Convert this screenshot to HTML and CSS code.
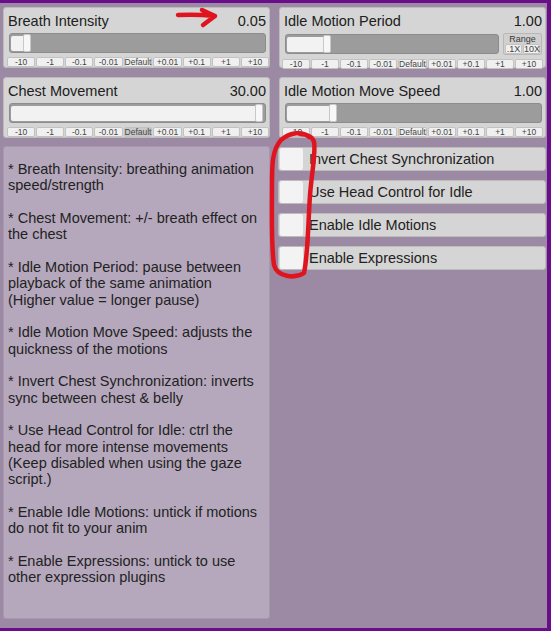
FILE: index.html
```html
<!DOCTYPE html>
<html>
<head>
	<title>Breath settings</title>
	<link rel="stylesheet" href="styles.css">
</head>
<body>
	<div class="window">
		<div class="col">
			<div class="panel">
				<div class="head"><span>Breath Intensity</span><span>0.05</span></div>
				<div class="row">
					<div class="track"><div class="fill" style="width:5%"></div><div class="knob"></div></div>
				</div>
				<div class="steps">
					<button>-10</button><button>-1</button><button>-0.1</button><button>-0.01</button><button>Default</button><button>+0.01</button><button>+0.1</button><button>+1</button><button>+10</button>
				</div>
			</div>
			<div class="panel">
				<div class="head"><span>Chest Movement</span><span>30.00</span></div>
				<div class="row">
					<div class="track"><div class="fill" style="width:96.8%"></div><div class="knob"></div></div>
				</div>
				<div class="steps">
					<button>-10</button><button>-1</button><button>-0.1</button><button>-0.01</button><button class="down">Default</button><button>+0.01</button><button>+0.1</button><button>+1</button><button>+10</button>
				</div>
			</div>
			<div class="info">
				<p>* Breath Intensity: breathing animation<br>speed/strength</p>
				<p>* Chest Movement: +/- breath effect on<br>the chest</p>
				<p>* Idle Motion Period: pause between<br>playback of the same animation<br>(Higher value = longer pause)</p>
				<p>* Idle Motion Move Speed: adjusts the<br>quickness of the motions</p>
				<p>* Invert Chest Synchronization: inverts<br>sync between chest &amp; belly</p>
				<p>* Use Head Control for Idle: ctrl the<br>head for more intense movements<br>(Keep disabled when using the gaze<br>script.)</p>
				<p>* Enable Idle Motions: untick if motions<br>do not fit to your anim</p>
				<p>* Enable Expressions: untick to use<br>other expression plugins</p>
			</div>
		</div>
		<div class="col right">
			<div class="panel">
				<div class="head"><span>Idle Motion Period</span><span>1.00</span></div>
				<div class="row">
					<div class="track"><div class="fill" style="width:17.5%"></div><div class="knob"></div></div>
					<div class="range">
						<span>Range</span>
						<div class="range-btns"><button>.1X</button><button>10X</button></div>
					</div>
				</div>
				<div class="steps">
					<button>-10</button><button>-1</button><button>-0.1</button><button>-0.01</button><button>Default</button><button>+0.01</button><button>+0.1</button><button>+1</button><button>+10</button>
				</div>
			</div>
			<div class="panel">
				<div class="head"><span>Idle Motion Move Speed</span><span>1.00</span></div>
				<div class="row">
					<div class="track"><div class="fill" style="width:17%"></div><div class="knob"></div></div>
				</div>
				<div class="steps">
					<button>-10</button><button>-1</button><button>-0.1</button><button>-0.01</button><button>Default</button><button>+0.01</button><button>+0.1</button><button>+1</button><button>+10</button>
				</div>
			</div>
			<div class="toggle"><span class="box"></span>Invert Chest Synchronization</div>
			<div class="toggle"><span class="box"></span>Use Head Control for Idle</div>
			<div class="toggle"><span class="box"></span>Enable Idle Motions</div>
			<div class="toggle"><span class="box"></span>Enable Expressions</div>
		</div>

		<!-- red marks drawn over the screenshot -->
		<svg class="marks" width="551" height="631" viewBox="0 0 551 631">
			<path d="M178 15 Q196 14 215 16 M202 10 L215 16 L203 25" />
			<path d="M309 137 C303 131 290 132 281 140 C272 150 272 165 272 185 C272 215 271 245 274 265 C277 277 295 279 304 273 C308 255 308 225 310 195 C312 170 316 152 314 142 C313 137 307 134 300 134" />
		</svg>
	</div>
</body>
</html>
```
FILE: styles.css
```css
html, body{
  margin:0;
  height:100%;
}
body{
  background-color:#9c89a4;
  font-family:"Liberation Sans", Arial, sans-serif;
  color:#202020;
}
.window{
  position:relative;
  box-sizing:border-box;
  height:631px;
  border-top:3px solid #6a0d8a;
  border-right:4px solid #6a0d8a;
  border-bottom:3px solid #6a0d8a;
  padding:4px 1px 9px 3px;
  display:grid;
  grid-template-columns:267px 267px;
  column-gap:9px;
}
.col{
  display:flex;
  flex-direction:column;
  gap:9px;
}
.panel{
  box-sizing:border-box;
  height:61px;
  background-color:#d5d5d5;
  border:1px solid #bcbcbc;
  border-radius:3px;
  padding:4px 3px 0 4px;
}
.head{
  display:flex;
  justify-content:space-between;
  font-size:14.5px;
  line-height:18px;
}
.row{
  display:flex;
  align-items:center;
  gap:4px;
  margin:3px 0 0 1px;
}
.track{
  flex:1;
  box-sizing:border-box;
  height:20px;
  display:flex;
  align-items:center;
  padding:0 1px;
  background-color:#9c9c9c;
  border:1px solid #8c8c8c;
  border-radius:3px;
}
.fill{
  height:15px;
  background-color:#f2f2f2;
  border-radius:2px 0 0 2px;
}
.knob{
  flex:none;
  width:8px;
  height:18px;
  box-sizing:border-box;
  background-color:#f7f7f7;
  border:1px solid #c8c8c8;
  border-radius:2px;
  margin-left:-1px;
}
.steps{
  display:grid;
  grid-template-columns:repeat(9, 1fr);
  gap:1px;
  margin:4px -3px 0 -1px;
}
.right .steps{
  margin:4px -1px 0 -2px;
}
.steps button, .range button{
  box-sizing:border-box;
  height:10px;
  padding:0;
  font-family:"Liberation Sans", Arial, sans-serif;
  font-size:8.5px;
  line-height:8px;
  color:#444;
  background-color:#f0f0f0;
  border:1px solid #c2c2c2;
  border-radius:2px;
}
.steps button.down{
  background-color:#c9c9c9;
}
.range{
  box-sizing:border-box;
  width:39px;
  height:22px;
  background-color:#d0d0d0;
  border:1px solid #b8b8b8;
  border-radius:2px;
  display:flex;
  flex-direction:column;
  align-items:center;
  font-size:9px;
  line-height:10px;
  color:#3a3a3a;
}
.range-btns{
  display:flex;
  gap:1px;
}
.range button{
  width:17px;
  font-size:9px;
}
.info{
  flex:1;
  margin-top:-1px;
  background-color:#b5a8bc;
  border:1px solid #a898af;
  border-radius:3px;
  padding:14px 4px 0 4px;
  font-size:14.5px;
  line-height:16.33px;
  color:#222;
}
.info p{
  margin:0 0 16.33px;
}
.toggle{
  box-sizing:border-box;
  height:24px;
  margin-left:-1px;
  display:flex;
  align-items:center;
  gap:6px;
  background-color:#d5d5d5;
  border:1px solid #bcbcbc;
  border-radius:3px;
  font-size:14.5px;
  color:#222;
}
.toggle .box{
  width:23px;
  height:22px;
  margin-left:1px;
  background-color:#f3f3f3;
  border-radius:2px;
}
.marks{
  position:absolute;
  top:-3px;
  left:0;
  pointer-events:none;
}
.marks path{
  fill:none;
  stroke:#e0141e;
  stroke-width:4.5;
  stroke-linecap:round;
  stroke-linejoin:round;
}
```
